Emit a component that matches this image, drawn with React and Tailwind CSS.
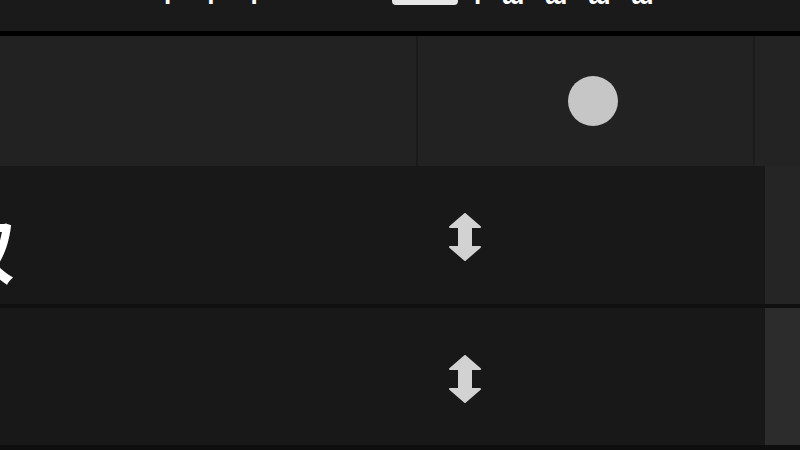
import React from 'react';

const SortArrow = () => (
  <svg width="36" height="48" viewBox="0 0 36 48" className="block">
    <polygon
      points="18,1 33,14 24,14 24,34 33,34 18,47 3,34 12,34 12,14 3,14"
      fill="#d2d2d2"
      stroke="#d2d2d2"
      strokeWidth="2"
      strokeLinejoin="round"
    />
  </svg>
);

const Row = ({ label, side }) => (
  <div className="flex flex-1">
    <div className="relative w-[765px] bg-[#181818] flex items-center">
      {label && (
        <span
          className="absolute left-[-55px] top-[47px] text-[70px] font-bold leading-none text-white"
          style={{ fontFamily: '"Noto Sans CJK SC", sans-serif' }}
        >
          {label}
        </span>
      )}
      <div className="ml-[447px] mt-[5px]">
        <SortArrow />
      </div>
    </div>
    <div className={`flex-1 ${side}`} />
  </div>
);

export default function App() {
  return (
    <div className="w-[800px] h-[450px] bg-[#0e0e0e] overflow-hidden flex flex-col" style={{ fontFamily: '"Liberation Sans", sans-serif' }}>
      {/* toolbar, mostly cropped away */}
      <div className="relative h-[31px] bg-[#1a1a1a] overflow-hidden text-white">
        <div className="absolute top-[-18px] left-[164px] flex gap-[36px] text-[26px] font-bold leading-none">
          <span>ı</span>
          <span>ı</span>
          <span>ı</span>
        </div>
        <div className="absolute top-0 left-[392px] w-[66px] h-[5px] rounded-b-sm bg-[#e6e6e6]" />
        <div className="absolute top-[-18px] left-[474px] flex gap-[20px] text-[26px] font-bold leading-none">
          <span>ı</span>
          <span>ɯ</span>
          <span>ɯ</span>
          <span>ɯ</span>
          <span>ɯ</span>
        </div>
      </div>
      <div className="h-[5px] bg-black" />

      {/* header */}
      <div className="flex h-[130px] bg-[#222222]">
        <div className="w-[418px] border-r-2 border-[#1a1a1a]" />
        <div className="w-[337px] flex items-center justify-center border-r-2 border-[#1c1c1c]">
          <div className="w-[50px] h-[50px] rounded-full bg-[#c6c6c6] ml-[14px]" />
        </div>
        <div className="flex-1 bg-[#232323]" />
      </div>

      <div className="flex flex-col h-[279px]">
        <Row label="权" side="bg-[#252525]" />
        <div className="h-[4px] bg-[#101010]" />
        <Row side="bg-[#2c2c2c]" />
      </div>
      <div className="flex-1 bg-[#0e0e0e]" />
    </div>
  );
}
